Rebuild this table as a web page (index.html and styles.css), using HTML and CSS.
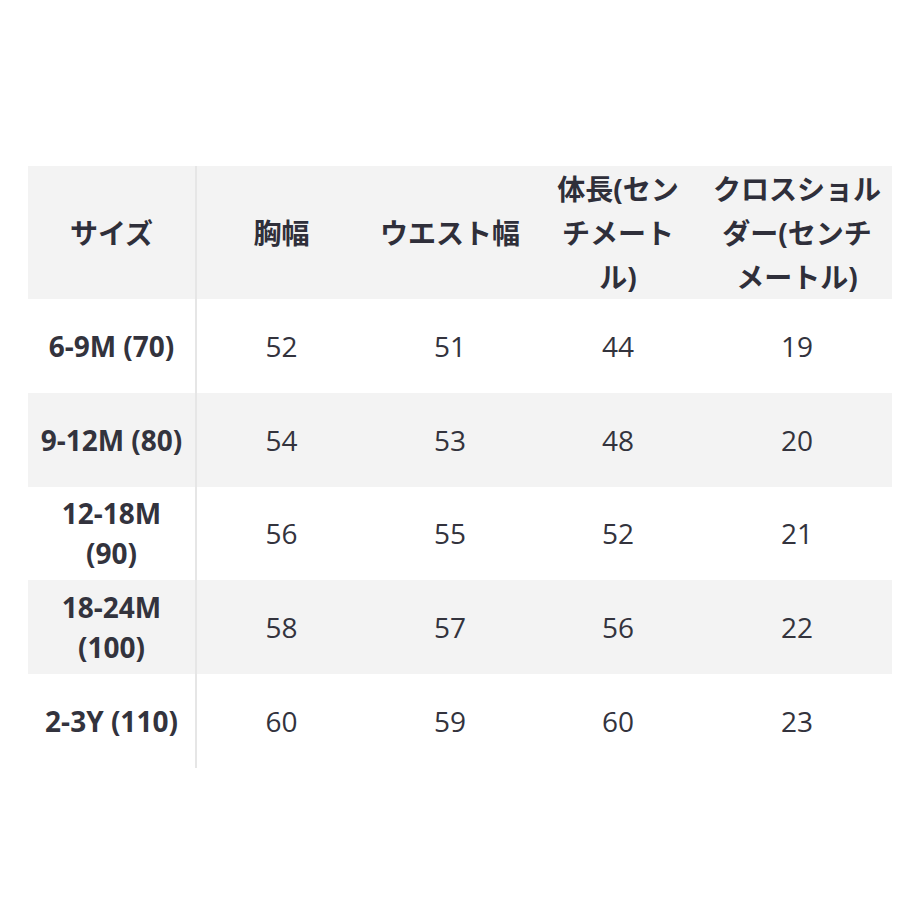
FILE: index.html
```html
<!DOCTYPE html>
<html lang="ja">
<head>
<meta charset="utf-8">
<link rel="stylesheet" href="styles.css">
</head>
<body>
<div class="page">
  <div class="size-table">
    <div class="cell head first">サイズ</div>
    <div class="cell head">胸幅</div>
    <div class="cell head">ウエスト幅</div>
    <div class="cell head">体長(センチメートル)</div>
    <div class="cell head">クロスショルダー(センチメートル)</div>

    <div class="cell label first">6-9M (70)</div>
    <div class="cell">52</div>
    <div class="cell">51</div>
    <div class="cell">44</div>
    <div class="cell">19</div>

    <div class="cell label first alt">9-12M (80)</div>
    <div class="cell alt">54</div>
    <div class="cell alt">53</div>
    <div class="cell alt">48</div>
    <div class="cell alt">20</div>

    <div class="cell label first">12-18M (90)</div>
    <div class="cell">56</div>
    <div class="cell">55</div>
    <div class="cell">52</div>
    <div class="cell">21</div>

    <div class="cell label first alt">18-24M (100)</div>
    <div class="cell alt">58</div>
    <div class="cell alt">57</div>
    <div class="cell alt">56</div>
    <div class="cell alt">22</div>

    <div class="cell label first">2-3Y (110)</div>
    <div class="cell">60</div>
    <div class="cell">59</div>
    <div class="cell">60</div>
    <div class="cell">23</div>
  </div>
</div>
</body>
</html>
```

FILE: styles.css
```css
html, body {
  margin: 0;
  padding: 0;
  background: #ffffff;
}

.page {
  padding: 166px 28px 0 28px;
}

.size-table {
  display: grid;
  grid-template-columns: 169px 169px 168px 168px 190px;
  grid-template-rows: 133px repeat(5, 93.8px);
  width: 864px;
  font-family: "Open Sans", "Noto Sans CJK JP", sans-serif;
  font-size: 28px;
  color: #33333d;
}

.cell {
  display: flex;
  align-items: center;
  justify-content: center;
  text-align: center;
  padding: 0 10px;
  line-height: 40px;
  word-break: normal;
  line-break: strict;
}

.head {
  background: #f3f3f3;
  font-weight: 700;
  line-height: 44px;
  color: #2f2f3a;
}

.label {
  font-weight: 700;
}

.alt {
  background: #f3f3f3;
}

.first {
  border-right: 2px solid #e6e6e6;
}
```
